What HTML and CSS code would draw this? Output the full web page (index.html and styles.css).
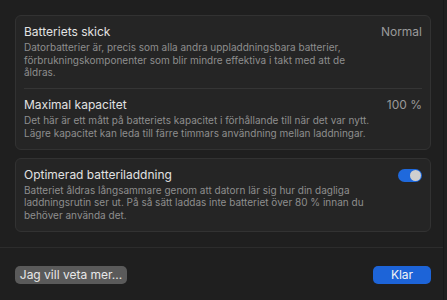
FILE: index.html
```html
<!DOCTYPE html>
<html lang="sv">

<head>
    <meta charset="UTF-8">
    <meta name="viewport" content="width=device-width, initial-scale=1.0">
    <title>Batteri</title>
    <link rel="stylesheet" href="styles.css">
</head>

<body>
    <div class="sheet">
        <div class="content">
            <div class="card">
                <div class="row">
                    <div class="text">
                        <p class="title">Batteriets skick</p>
                        <p class="desc">Datorbatterier är, precis som alla andra uppladdningsbara batterier,<br>
                            förbrukningskomponenter som blir mindre effektiva i takt med att de<br>
                            åldras.</p>
                    </div>
                    <span class="value">Normal</span>
                </div>
                <div class="row">
                    <div class="text">
                        <p class="title">Maximal kapacitet</p>
                        <p class="desc">Det här är ett mått på batteriets kapacitet i förhållande till när det var nytt.<br>
                            Lägre kapacitet kan leda till färre timmars användning mellan laddningar.</p>
                    </div>
                    <span class="value">100 %</span>
                </div>
            </div>

            <div class="card">
                <div class="row">
                    <div class="text">
                        <p class="title">Optimerad batteriladdning</p>
                        <p class="desc">Batteriet åldras långsammare genom att datorn lär sig hur din dagliga<br>
                            laddningsrutin ser ut. På så sätt laddas inte batteriet över 80 % innan du<br>
                            behöver använda det.</p>
                    </div>
                    <span class="toggle"><span class="knob"></span></span>
                </div>
            </div>
        </div>

        <div class="footer">
            <button class="btn">Jag vill veta mer...</button>
            <button class="btn primary">Klar</button>
        </div>
    </div>
</body>

</html>
```

FILE: styles.css
```css
* {
    margin: 0;
    padding: 0;
    box-sizing: border-box;
}

html,
body {
    background: #1f1f1f;
}

body {
    width: 447px;
    height: 300px;
    overflow: hidden;
    font-family: Inter, "Liberation Sans", sans-serif;
    color: #dedede;
}

.sheet {
    width: 444px;
    height: 300px;
    background: #1f1f1f;
    border-right: 1px solid #181818;
}

.content {
    padding: 15px 12px 0 15px;
    height: 248px;
    border-bottom: 1px solid #2c2c2c;
}

.card {
    background: #252525;
    border: 1px solid #323232;
    border-radius: 6px;
    padding: 0 8px;
    margin-bottom: 8px;
}

.row {
    display: flex;
    justify-content: space-between;
    align-items: flex-start;
    padding: 8px 0 9px;
}

.row + .row {
    border-top: 1px solid #353535;
}

.text {
    white-space: nowrap;
}

.title {
    font-size: 12px;
    line-height: 16px;
    color: #e2e2e2;
}

.desc {
    margin-top: 1px;
    font-size: 10px;
    line-height: 12.7px;
    color: #8e8e8e;
}

.value {
    font-size: 12px;
    line-height: 16px;
    color: #9a9a9a;
}

.toggle {
    margin-top: 2px;
    width: 24px;
    height: 13px;
    border-radius: 7px;
    background: #1f69dc;
    display: flex;
    justify-content: flex-end;
    align-items: center;
    padding: 0 1px;
}

.knob {
    width: 11px;
    height: 11px;
    border-radius: 50%;
    background: #cfcfcf;
}

.footer {
    display: flex;
    justify-content: space-between;
    padding: 18px 12px 0 15px;
}

.btn {
    height: 18px;
    width: 112px;
    border: none;
    border-radius: 5px;
    background: #5a5a5a;
    color: #e8e8e8;
    font-family: Inter, "Liberation Sans", sans-serif;
    font-size: 12px;
    line-height: 18px;
}

.btn.primary {
    width: 58px;
    background: #1d64d8;
    color: #f4f4f4;
}
```
